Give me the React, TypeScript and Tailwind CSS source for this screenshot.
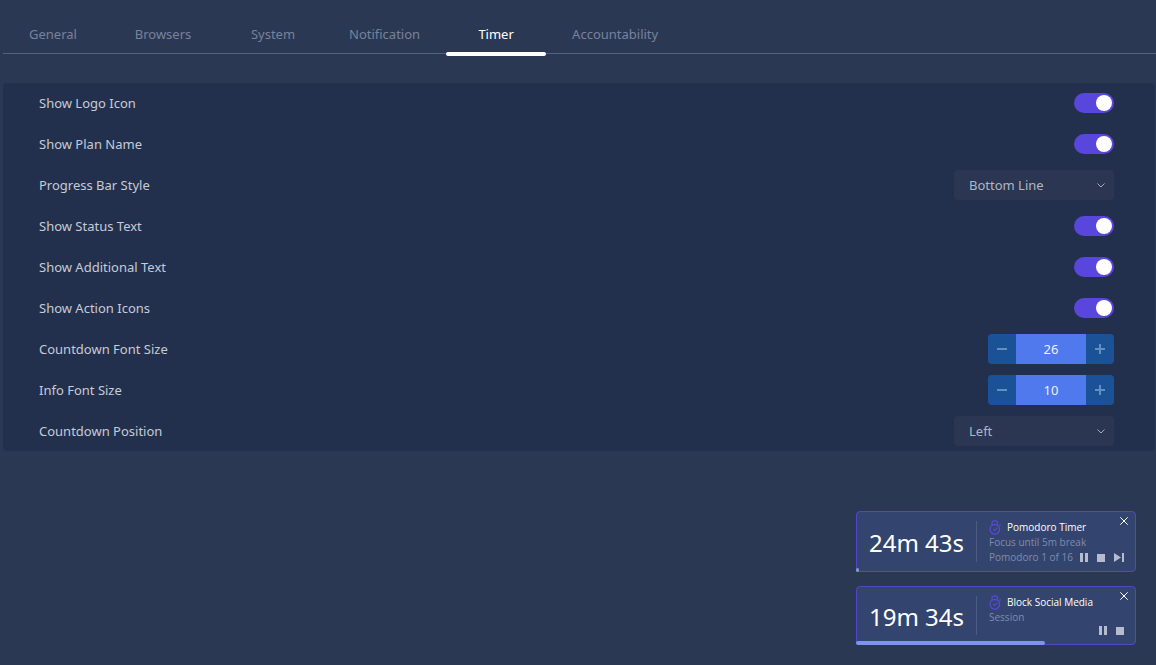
import { useState } from "react";
import type { ReactNode } from "react";

type ToggleKey = "logo" | "plan" | "status" | "additional" | "actions";

const tabs = ["General", "Browsers", "System", "Notification", "Timer", "Accountability"];

function Row({ id, label, children }: { id: string; label: string; children: ReactNode }) {
  return (
    <div className="flex h-[30px] items-center justify-between">
      <label htmlFor={id} className="pt-0.5 text-[13px] text-[#c6cbd6]">
        {label}
      </label>
      {children}
    </div>
  );
}

function Toggle({ id, checked, onChange }: { id: string; checked: boolean; onChange: () => void }) {
  return (
    <input
      id={id}
      type="checkbox"
      checked={checked}
      onChange={onChange}
      className="flex h-5 w-10 cursor-pointer appearance-none items-center rounded-full bg-[#3c4866] px-0.5 transition-colors before:size-4 before:rounded-full before:bg-white before:content-[''] checked:justify-end checked:bg-[#5946dc]"
    />
  );
}

function Select({ id, options }: { id: string; options: string[] }) {
  return (
    <div className="relative">
      <select
        id={id}
        className="h-[30px] w-40 appearance-none rounded bg-[#2a3652] pt-0.5 pr-8 pl-[15px] text-[13px] text-[#b0b6c4] outline-none"
      >
        {options.map((option) => (
          <option key={option}>{option}</option>
        ))}
      </select>
      <svg
        viewBox="0 0 8 5"
        className="pointer-events-none absolute top-[13px] right-[9px] h-[5px] w-2 fill-none stroke-[#a3aabb]"
      >
        <path d="M0.5 0.5L4 4L7.5 0.5" />
      </svg>
    </div>
  );
}

function Stepper({ id, label, value, onChange }: { id: string; label: string; value: number; onChange: (value: number) => void }) {
  const button = "flex w-7 items-center justify-center bg-[#1b5297]";

  return (
    <div className="flex h-[30px] overflow-hidden rounded">
      <button aria-label={`Decrease ${label}`} onClick={() => onChange(value - 1)} className={button}>
        <svg viewBox="0 0 10 10" className="size-2.5 fill-none stroke-[#628fc2] stroke-2">
          <path d="M0 5H10" />
        </svg>
      </button>
      <input
        id={id}
        type="text"
        inputMode="numeric"
        value={value}
        onChange={(e) => onChange(Number(e.target.value) || 0)}
        className="w-[70px] bg-[#4f79ed] pt-0.5 text-center text-[13px] text-[#eef2fd] outline-none"
      />
      <button aria-label={`Increase ${label}`} onClick={() => onChange(value + 1)} className={button}>
        <svg viewBox="0 0 10 10" className="size-2.5 fill-none stroke-[#628fc2] stroke-2">
          <path d="M0 5H10M5 0V10" />
        </svg>
      </button>
    </div>
  );
}

function StopwatchIcon() {
  return (
    <svg viewBox="0 0 13 15" className="h-[15px] w-[13px] fill-none stroke-[#5848d8]">
      <circle cx="5.8" cy="9.3" r="4.8" strokeWidth="1.3" />
      <path d="M3.4 5C2 2.6 3.6 0.8 5.8 0.8S9.6 2.6 8.2 5" strokeWidth="1.3" />
      <path d="M4 8.8L5.6 10.4L8.6 7.6M10.2 5.6L12 4.8" strokeWidth="1.1" />
    </svg>
  );
}

function PauseIcon() {
  return (
    <svg viewBox="0 0 8 9" className="h-[9px] w-2 fill-[#b4bccd]">
      <path d="M0 0H3V9H0ZM5 0H8V9H5Z" />
    </svg>
  );
}

function StopIcon() {
  return (
    <svg viewBox="0 0 8 8" className="size-2 fill-[#b4bccd]">
      <rect width="8" height="8" />
    </svg>
  );
}

function SkipIcon() {
  return (
    <svg viewBox="0 0 10 9" className="h-[9px] w-2.5 fill-[#b4bccd]">
      <path d="M0 0L7 4.5L0 9ZM8 0H10V9H8Z" />
    </svg>
  );
}

interface TimerCardProps {
  time: string;
  title: string;
  lines: string[];
  progress: number;
  canSkip?: boolean;
}

function TimerCard({ time, title, lines, progress, canSkip }: TimerCardProps) {
  return (
    <section className="relative flex min-h-[59px] w-[280px] rounded border border-[#5346c9] bg-[#33456e]">
      <p className="flex w-[119px] items-center justify-center pt-0.5 text-2xl text-white">{time}</p>
      <div className="my-[9px] w-px bg-[#4b5b82]" />
      <div className="flex-1 pt-2 pb-1.5 pl-3 font-['Open_Sans',sans-serif] text-[10px] leading-[15px]">
        <h2 className="flex items-center gap-[5px] text-white">
          <StopwatchIcon />
          {title}
        </h2>
        {lines.map((line) => (
          <p key={line} className="text-[#7f8cab]">
            {line}
          </p>
        ))}
      </div>
      <button aria-label={`Close ${title}`} className="absolute top-[5px] right-[7px]">
        <svg viewBox="0 0 8 8" className="size-2 fill-none stroke-white">
          <path d="M0.3 0.3L7.7 7.7M7.7 0.3L0.3 7.7" />
        </svg>
      </button>
      <div className="absolute right-[11px] bottom-[9px] flex h-[9px] items-center gap-[9px]">
        <button aria-label="Pause">
          <PauseIcon />
        </button>
        <button aria-label="Stop">
          <StopIcon />
        </button>
        {canSkip && (
          <button aria-label="Skip">
            <SkipIcon />
          </button>
        )}
      </div>
      <div className="absolute -bottom-px -left-px h-1 rounded-full bg-[#7e94f2]" style={{ width: `${progress}%` }} />
    </section>
  );
}

export default function App() {
  const [activeTab, setActiveTab] = useState("Timer");
  const [toggles, setToggles] = useState({ logo: true, plan: true, status: true, additional: true, actions: true });
  const [countdownSize, setCountdownSize] = useState(26);
  const [infoSize, setInfoSize] = useState(10);

  const toggle = (key: ToggleKey) => (
    <Toggle id={key} checked={toggles[key]} onChange={() => setToggles({ ...toggles, [key]: !toggles[key] })} />
  );

  return (
    <div className="min-h-screen bg-[#2b3854] pl-[3px] font-['Noto_Sans',sans-serif]">
      <nav className="flex h-[54px] items-end gap-2.5 border-b border-[#56617d]" role="tablist">
        {tabs.map((tab) => (
          <button
            key={tab}
            role="tab"
            aria-selected={activeTab === tab}
            onClick={() => setActiveTab(tab)}
            className={`relative h-9 min-w-[100px] px-4 text-[13px] ${
              activeTab === tab ? "text-white" : "text-[#78829a]"
            }`}
          >
            {tab}
            {activeTab === tab && <span className="absolute inset-x-0 -bottom-[3px] h-1 rounded-sm bg-white" />}
          </button>
        ))}
      </nav>

      <main className="mt-[29px] mr-px flex flex-col gap-[11px] rounded-sm bg-[#23304d] py-[5px] pr-[41px] pl-9">
        <Row id="logo" label="Show Logo Icon">{toggle("logo")}</Row>
        <Row id="plan" label="Show Plan Name">{toggle("plan")}</Row>
        <Row id="bar-style" label="Progress Bar Style">
          <Select id="bar-style" options={["Bottom Line", "Background", "None"]} />
        </Row>
        <Row id="status" label="Show Status Text">{toggle("status")}</Row>
        <Row id="additional" label="Show Additional Text">{toggle("additional")}</Row>
        <Row id="actions" label="Show Action Icons">{toggle("actions")}</Row>
        <Row id="countdown-size" label="Countdown Font Size">
          <Stepper id="countdown-size" label="countdown font size" value={countdownSize} onChange={setCountdownSize} />
        </Row>
        <Row id="info-size" label="Info Font Size">
          <Stepper id="info-size" label="info font size" value={infoSize} onChange={setInfoSize} />
        </Row>
        <Row id="position" label="Countdown Position">
          <Select id="position" options={["Left", "Right"]} />
        </Row>
      </main>

      <aside className="flex flex-col items-end gap-[14px] pt-[60px] pr-5">
        <TimerCard
          time="24m 43s"
          title="Pomodoro Timer"
          lines={["Focus until 5m break", "Pomodoro 1 of 16"]}
          progress={1}
          canSkip
        />
        <TimerCard time="19m 34s" title="Block Social Media" lines={["Session"]} progress={68} />
      </aside>
    </div>
  );
}
